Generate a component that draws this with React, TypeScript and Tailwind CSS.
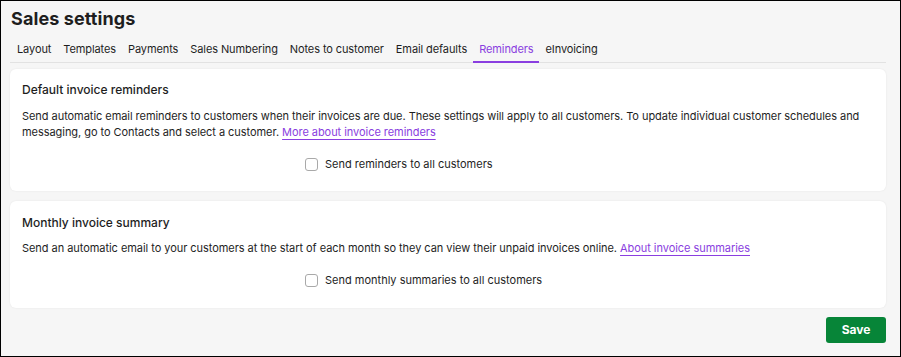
const tabs = ["Layout", "Templates", "Payments", "Sales Numbering", "Notes to customer", "Email defaults", "Reminders", "eInvoicing"]

function Check({ label }: { label: string }) {
  return (
    <label className="flex items-center gap-[7px] pl-[283px] text-[11px] text-[#1e1e1e]">
      <span className="w-[13px] h-[13px] rounded-[3px] border border-[#a9a9a9] bg-white" />
      {label}
    </label>
  )
}

export default function App() {
  return (
    <div className="w-[901px] h-[357px] border border-black bg-[#f6f6f6] font-['Inter',sans-serif] text-[#1e1e1e] flex flex-col pl-[9px] pr-[14px]">
      <h1 className="text-[18px] font-bold tracking-[0.1px] mt-[5px] leading-[26px] pl-[1px]">Sales settings</h1>

      {/* Tabs */}
      <div className="flex mt-[9px] border-b border-[#e2e2e2] pl-[1px]">
        {tabs.map((t) => (
          <div
            key={t}
            className={`px-[6px] pb-[4px] text-[11px] tracking-[-0.1px] leading-[16px] border-b-2 -mb-px ${
              t === "Reminders" ? "border-[#8a3ee0] text-[#8a3ee0]" : "border-transparent"
            }`}
          >
            {t}
          </div>
        ))}
      </div>

      {/* Default invoice reminders */}
      <div className="bg-white rounded-[6px] shadow-[0_0_2px_rgba(0,0,0,0.08)] mt-[6px] h-[122px] px-[12px] pt-[12px]">
        <h2 className="text-[12px] font-medium leading-[18px]">Default invoice reminders</h2>
        <p className="text-[11px] tracking-[-0.05px] leading-[16px] mt-[9px]">
          Send automatic email reminders to customers when their invoices are due. These settings will apply to all customers. To update individual customer schedules and messaging, go to Contacts and select a customer.{" "}
          <a className="text-[#8a3ee0] underline decoration-[#8a3ee0] underline-offset-[3px]">More about invoice reminders</a>
        </p>
        <div className="mt-[16px]">
          <Check label="Send reminders to all customers" />
        </div>
      </div>

      {/* Monthly invoice summary */}
      <div className="bg-white rounded-[6px] shadow-[0_0_2px_rgba(0,0,0,0.08)] mt-[10px] h-[107px] px-[12px] pt-[13px]">
        <h2 className="text-[12px] font-medium leading-[18px]">Monthly invoice summary</h2>
        <p className="text-[11px] tracking-[-0.05px] leading-[16px] mt-[8px]">
          Send an automatic email to your customers at the start of each month so they can view their unpaid invoices online.{" "}
          <a className="text-[#8a3ee0] underline decoration-[#8a3ee0] underline-offset-[3px]">About invoice summaries</a>
        </p>
        <div className="mt-[16px]">
          <Check label="Send monthly summaries to all customers" />
        </div>
      </div>

      <div className="flex justify-end mt-[9px]">
        <button className="w-[60px] h-[26px] rounded-[3px] bg-[#078538] text-white text-[12px] font-bold">Save</button>
      </div>
    </div>
  )
}
